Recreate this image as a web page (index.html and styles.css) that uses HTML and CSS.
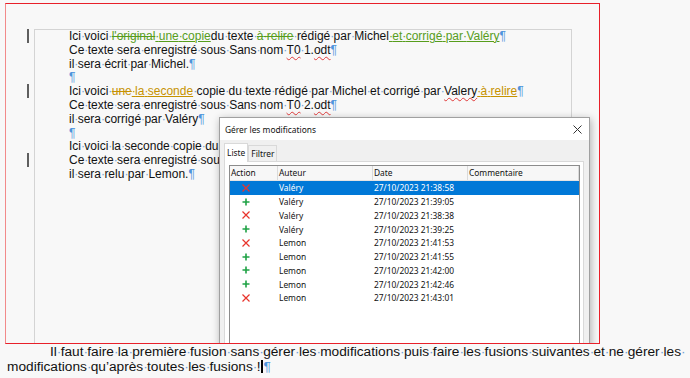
FILE: index.html
```html
<!DOCTYPE html>
<html lang="fr">
<head>
    <meta charset="UTF-8">
    <meta name="viewport" content="width=device-width, initial-scale=1.0">
    <title>Gérer les modifications</title>
    <link rel="stylesheet" href="styles.css">
</head>
<body>
    <div class="frame">
        <div class="page">
            <div class="line mark">Ici<i>·</i>voici<i>·</i><del class="g">l'original</del><ins class="g"><i>·</i>une<i>·</i>copie</ins>du<i>·</i>texte<i>·</i><del class="g">à<i>·</i>relire</del><i>·</i>rédigé<i>·</i>par<i>·</i>Michel<ins class="g"><i>·</i>et<i>·</i>corrigé<i>·</i>par<i>·</i>Valéry</ins><span class="pm">¶</span></div>
            <div class="line">Ce<i>·</i>texte<i>·</i>sera<i>·</i>enregistré<i>·</i>sous<i>·</i>Sans<i>·</i>nom<i>·</i><span class="sp">T0</span><i>·</i>1.<span class="sp">odt</span><span class="pm">¶</span></div>
            <div class="line">il<i>·</i>sera<i>·</i>écrit<i>·</i>par<i>·</i>Michel.<span class="pm">¶</span></div>
            <div class="line"><span class="pm">¶</span></div>
            <div class="line mark">Ici<i>·</i>voici<i>·</i><del class="o">une</del><ins class="o"><i>·</i>la<i>·</i>seconde</ins><i>·</i>copie<i>·</i>du<i>·</i>texte<i>·</i>rédigé<i>·</i>par<i>·</i>Michel<i>·</i>et<i>·</i>corrigé<i>·</i>par<i>·</i><span class="sp">Valery</span><ins class="o"><i>·</i>à<i>·</i>relire</ins><span class="pm">¶</span></div>
            <div class="line">Ce<i>·</i>texte<i>·</i>sera<i>·</i>enregistré<i>·</i>sous<i>·</i>Sans<i>·</i>nom<i>·</i><span class="sp">T0</span><i>·</i>2.<span class="sp">odt</span><span class="pm">¶</span></div>
            <div class="line">il<i>·</i>sera<i>·</i>corrigé<i>·</i>par<i>·</i>Valéry<span class="pm">¶</span></div>
            <div class="line"><span class="pm">¶</span></div>
            <div class="line">Ici<i>·</i>voici<i>·</i>la<i>·</i>seconde<i>·</i>copie<i>·</i>du</div>
            <div class="line mark">Ce<i>·</i>texte<i>·</i>sera<i>·</i>enregistré<i>·</i>sous</div>
            <div class="line">il<i>·</i>sera<i>·</i>relu<i>·</i>par<i>·</i>Lemon.<span class="pm">¶</span></div>
        </div>

        <div class="dialog">
            <div class="dlg-title">
                <span>Gérer les modifications</span>
                <svg class="close" width="9" height="9" viewBox="0 0 9 9"><path d="M0.5 0.5L8.5 8.5M8.5 0.5L0.5 8.5" stroke="#333" stroke-width="1" fill="none"/></svg>
            </div>
            <div class="dlg-body">
                <div class="tabs">
                    <span class="tab active">Liste</span>
                    <span class="tab">Filtrer</span>
                </div>
                <div class="panel">
                    <div class="list">
                        <div class="row head"><span>Action</span><span>Auteur</span><span>Date</span><span>Commentaire</span></div>
                        <div class="row sel"><span><svg class="ico" viewBox="0 0 8 8"><path class="x" d="M0.5 0.5L7.5 7.5M7.5 0.5L0.5 7.5"/></svg></span><span>Valéry</span><span>27/10/2023 21:38:58</span><span></span></div>
                        <div class="row"><span><svg class="ico" viewBox="0 0 8 8"><path class="p" d="M4 0.5V7.5M0.5 4H7.5"/></svg></span><span>Valéry</span><span>27/10/2023 21:39:05</span><span></span></div>
                        <div class="row"><span><svg class="ico" viewBox="0 0 8 8"><path class="x" d="M0.5 0.5L7.5 7.5M7.5 0.5L0.5 7.5"/></svg></span><span>Valéry</span><span>27/10/2023 21:38:38</span><span></span></div>
                        <div class="row"><span><svg class="ico" viewBox="0 0 8 8"><path class="p" d="M4 0.5V7.5M0.5 4H7.5"/></svg></span><span>Valéry</span><span>27/10/2023 21:39:25</span><span></span></div>
                        <div class="row"><span><svg class="ico" viewBox="0 0 8 8"><path class="x" d="M0.5 0.5L7.5 7.5M7.5 0.5L0.5 7.5"/></svg></span><span>Lemon</span><span>27/10/2023 21:41:53</span><span></span></div>
                        <div class="row"><span><svg class="ico" viewBox="0 0 8 8"><path class="p" d="M4 0.5V7.5M0.5 4H7.5"/></svg></span><span>Lemon</span><span>27/10/2023 21:41:55</span><span></span></div>
                        <div class="row"><span><svg class="ico" viewBox="0 0 8 8"><path class="p" d="M4 0.5V7.5M0.5 4H7.5"/></svg></span><span>Lemon</span><span>27/10/2023 21:42:00</span><span></span></div>
                        <div class="row"><span><svg class="ico" viewBox="0 0 8 8"><path class="p" d="M4 0.5V7.5M0.5 4H7.5"/></svg></span><span>Lemon</span><span>27/10/2023 21:42:46</span><span></span></div>
                        <div class="row"><span><svg class="ico" viewBox="0 0 8 8"><path class="x" d="M0.5 0.5L7.5 7.5M7.5 0.5L0.5 7.5"/></svg></span><span>Lemon</span><span>27/10/2023 21:43:01</span><span></span></div>
                    </div>
                </div>
            </div>
        </div>
    </div>

    <p class="tail">Il<i>·</i>faut<i>·</i>faire<i>·</i>la<i>·</i>première<i>·</i>fusion<i>·</i>sans<i>·</i>gérer<i>·</i>les<i>·</i>modifications<i>·</i>puis<i>·</i>faire<i>·</i>les<i>·</i>fusions<i>·</i>suivantes<i>·</i>et<i>·</i>ne<i>·</i>gérer<i>·</i>les<i>·</i><br>modifications<i>·</i>qu’après<i>·</i>toutes<i>·</i>les<i>·</i>fusions<i>·</i>!<span class="caret"></span><span class="pm">¶</span></p>
</body>
</html>
```

FILE: styles.css
```css
* {
    box-sizing: border-box;
}
body {
    margin: 0;
    background-color: #f8f8f8;
    font-family: "Liberation Sans", Arial, sans-serif;
    color: #111;
    overflow: hidden;
}
/* marque d'espace : le point est plus large qu'une espace, on le resserre */
i {
    font-style: normal;
    color: #6f9fd6;
    letter-spacing: -0.055em;
}
.pm {
    color: #4f94dc;
}
del, ins {
    text-decoration-thickness: 1px;
}
.g {
    color: #579d1c;
}
.o {
    color: #c69200;
}
.g i, .o i {
    color: inherit;
}
.sp {
    text-decoration: underline wavy #e03a3a;
    text-decoration-thickness: 1px;
    text-underline-offset: 2px;
}

/* cadre rouge autour du document */
.frame {
    position: relative;
    width: 595px;
    height: 341px;
    margin: 3px 0 0 5px;
    border: 1px solid #e8202a;
    border-left-color: #f28a8a;
    overflow: hidden;
}
.page {
    margin: 25px 0 0 28px;
    width: 538px;
    height: 330px;
    border: 1px solid #d4d4d4;
    border-bottom: none;
    padding-left: 34px;
    font-size: 12px;
    line-height: 13.8px;
}
.line {
    position: relative;
    height: 13.8px;
    white-space: nowrap;
}
.line.mark::before {
    content: "";
    position: absolute;
    left: -42px;
    top: -1px;
    width: 2px;
    height: 14px;
    background-color: #5f5f5f;
}

/* boîte de dialogue */
.dialog {
    position: absolute;
    left: 213px;
    top: 113px;
    width: 371px;
    height: 260px;
    background-color: #f0f0f0;
    border: 1px solid #a0a0a0;
    box-shadow: 1px 2px 8px rgba(0,0,0,0.3);
    font-family: "Noto Sans", sans-serif;
    font-size: 8.4px;
    color: #111;
}
.dlg-title {
    height: 22px;
    background-color: #fff;
    display: flex;
    align-items: center;
    justify-content: space-between;
    padding: 0 7px 0 5px;
}
.dlg-body {
    padding: 3px 5px 0 4px;
}
.tabs {
    display: flex;
    align-items: flex-end;
    height: 18px;
}
.tab {
    height: 16px;
    line-height: 15px;
    padding: 0 2px;
    border: 1px solid #d9d9d9;
    border-bottom: none;
    background-color: #f0f0f0;
}
.tab.active {
    height: 19px;
    line-height: 18px;
    margin-bottom: -1px;
    background-color: #fff;
    position: relative;
}
.panel {
    background-color: #fff;
    border: 1px solid #d9d9d9;
    padding: 3px 3px 0 4px;
    height: 200px;
}
.list {
    border: 1px solid #8c8c8c;
    background-color: #fff;
    height: 190px;
}
.row {
    display: grid;
    grid-template-columns: 48px 95px 95px 1fr;
    height: 13.75px;
    align-items: center;
}
.row span {
    padding-left: 1px;
    white-space: nowrap;
}
.row.head {
    height: 15px;
    background-color: #f7f7f7;
    border-bottom: 1px solid #e3e3e3;
}
.row.head span {
    height: 100%;
    line-height: 14px;
    border-right: 1px solid #dadada;
}
.row.sel {
    background-color: #0078d7;
    color: #fff;
}
.ico {
    display: block;
    width: 8px;
    height: 8px;
    margin-left: 11px;
}
.ico .x {
    stroke: #e8342c;
    stroke-width: 1.2;
    fill: none;
}
.ico .p {
    stroke: #1fa245;
    stroke-width: 1.6;
    fill: none;
}

/* paragraphe sous le cadre */
.tail {
    margin: 0;
    padding-left: 7px;
    text-indent: 43px;
    font-size: 13.7px;
    line-height: 15px;
    white-space: nowrap;
}
.caret {
    display: inline-block;
    width: 2px;
    height: 13px;
    margin-left: 1px;
    vertical-align: -2px;
    background-color: #000;
}
```
